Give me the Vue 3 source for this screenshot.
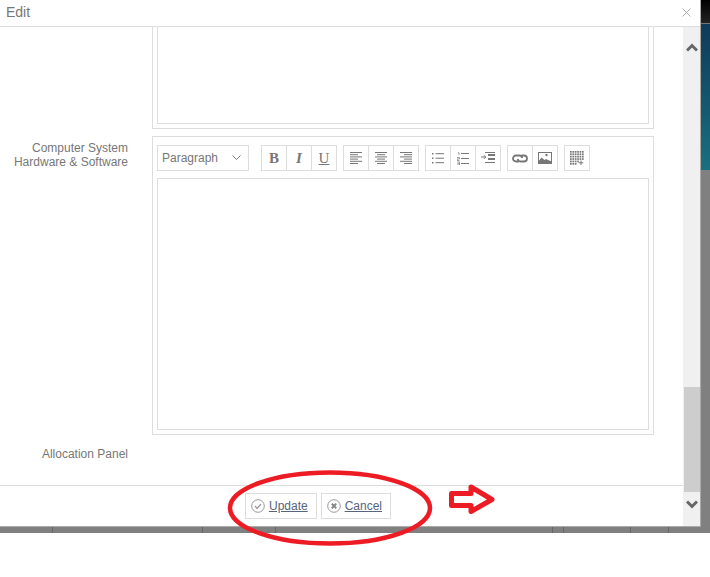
<script setup>
const groups = [
  [{ t: 'B', c: 'b' }, { t: 'I', c: 'i' }, { t: 'U', c: 'u' }],
  [{ k: 'left' }, { k: 'center' }, { k: 'right' }],
  [{ k: 'ul' }, { k: 'ol' }, { k: 'indent' }],
  [{ k: 'link' }, { k: 'image' }],
  [{ k: 'table' }],
]
const alignLines = {
  left: [[0, 12], [0, 8], [0, 12], [0, 8], [0, 12], [0, 8]],
  center: [[0, 12], [2, 8], [0, 12], [2, 8], [0, 12], [2, 8]],
  right: [[0, 12], [4, 8], [0, 12], [4, 8], [0, 12], [4, 8]],
}
const dots = []
for (let r = 0; r < 6; r++) {
  for (let c = 0; c < 6; c++) {
    if (!((r === 4 && c > 3) || (r === 5 && c > 2))) dots.push([c * 2.4, r * 2.4])
  }
}
const ticks = [52, 202, 275, 552, 563, 630, 668]
</script>

<template>
  <div class="page">
    <div class="backdrop">
      <div class="ticks">
        <i v-for="t in ticks" :key="t" class="tick" :style="{ left: t + 'px' }"></i>
      </div>
      <div class="modal">
        <header class="head">
          <span class="title">Edit</span>
          <svg width="9" height="9" viewBox="0 0 9 9"><path d="M.5.5l8 8M8.500.5l-8 8" stroke="#aaa" fill="none" /></svg>
        </header>
        <div class="content">
          <div class="col">
            <div class="form">
              <div class="row first">
                <div class="label"></div>
                <div class="frame cut"><div class="area a1"></div></div>
              </div>
              <div class="row">
                <div class="label">Computer System<br />Hardware &amp; Software</div>
                <div class="frame">
                  <div class="toolbar">
                    <div class="select"><span>Paragraph</span>
                      <svg width="9" height="6" viewBox="0 0 9 6"><path d="M.5.500L4.500 4.500 8.500.5" stroke="#777" fill="none" /></svg>
                    </div>
                    <div v-for="(g, gi) in groups" :key="gi" class="group">
                      <div v-for="(b, bi) in g" :key="bi" class="btn">
                        <span v-if="b.t" :class="b.c">{{ b.t }}</span>
                        <svg v-else-if="alignLines[b.k]" width="12" height="12" viewBox="0 0 12 12">
                          <rect v-for="(l, li) in alignLines[b.k]" :key="li" :x="l[0]" :y="li * 2.2" :width="l[1]" height="1" fill="#777" />
                        </svg>
                        <svg v-else-if="b.k === 'ul'" width="12" height="12" viewBox="0 0 12 12">
                          <g fill="#777"><rect x="0" y="1" width="1.500" height="1.500" /><rect x="0" y="5.500" width="1.500" height="1.500" /><rect x="0" y="10" width="1.500" height="1.500" /><rect x="3.500" y="1.200" width="8.500" height="1" /><rect x="3.500" y="5.700" width="8.500" height="1" /><rect x="3.500" y="10.200" width="8.500" height="1" /></g>
                        </svg>
                        <svg v-else-if="b.k === 'ol'" width="12" height="13" viewBox="0 0 12 13">
                          <g fill="#777"><rect x="4" y="1" width="8" height="1" /><rect x="4" y="6" width="8" height="1" /><rect x="4" y="11" width="8" height="1" /></g>
                          <path d="M1 1l1-.5V3M0 5.500h2.500V7H0v1.500h2.500M0 10h2.500v3H0M.5 11.500h2" stroke="#777" stroke-width=".7" fill="none" />
                        </svg>
                        <svg v-else-if="b.k === 'indent'" width="14" height="12" viewBox="0 0 14 12">
                          <g fill="#777"><rect x="4" y="0" width="10" height="1" /><rect x="7" y="2" width="7" height="2" /><rect x="7" y="6" width="7" height="2" /><rect x="4" y="10" width="10" height="1" /></g>
                          <path d="M0 5h4.500M3 3.200L4.800 5 3 6.800" stroke="#777" fill="none" />
                        </svg>
                        <svg v-else-if="b.k === 'link'" width="16" height="9" viewBox="0 0 16 9">
                          <path d="M7 7.500H4a3 3 0 0 1 0-6h3.500c1.500 0 2.500 1 2.700 2.500M9.500 1.500H12a3 3 0 0 1 0 6H8.500c-1.500 0-2.500-1-2.700-2.500" stroke="#777" stroke-width="1.800" fill="none" />
                        </svg>
                        <svg v-else-if="b.k === 'image'" width="14" height="12" viewBox="0 0 14 12">
                          <rect x=".5" y=".5" width="13" height="11" fill="#fff" stroke="#777" />
                          <circle cx="8.500" cy="3" r="1.200" fill="#777" />
                          <path d="M0 10l3.500-4.500 3 2.500 1.500-1 2 1 4 1.500V12H0z" fill="#777" />
                        </svg>
                        <svg v-else width="14" height="14" viewBox="0 0 14 14">
                          <rect v-for="(d, di) in dots" :key="di" :x="d[0]" :y="d[1]" width="1.700" height="1.700" fill="#777" />
                          <path d="M11 9.500V14M8.700 11.800h4.600" stroke="#777" fill="none" />
                        </svg>
                      </div>
                    </div>
                  </div>
                  <div class="area a2"></div>
                </div>
              </div>
              <div class="row last">
                <div class="label">Allocation Panel</div>
              </div>
            </div>
            <footer class="foot">
              <a class="action">
                <svg width="14" height="14" viewBox="0 0 14 14"><circle cx="7" cy="7" r="6.300" fill="none" stroke="#999" /><path d="M4 7l2.200 2.400L10 5" stroke="#999" stroke-width="1.300" fill="none" /></svg>
                <span>Update</span>
              </a>
              <a class="action">
                <svg width="14" height="14" viewBox="0 0 14 14"><circle cx="7" cy="7" r="6.300" fill="none" stroke="#999" /><path d="M4.800 4.800l4.400 4.400M9.200 4.800l-4.400 4.400" stroke="#888" stroke-width="2" fill="none" /></svg>
                <span>Cancel</span>
              </a>
            </footer>
          </div>
          <div class="scroll">
            <svg width="12" height="9" viewBox="0 0 12 9"><path d="M1 7.500L6 2.500l5 5" stroke="#666" stroke-width="3" fill="none" /></svg>
            <div class="track"><div class="thumb"></div></div>
            <svg width="12" height="9" viewBox="0 0 12 9"><path d="M1 1.500L6 6.500l5-5" stroke="#666" stroke-width="3" fill="none" /></svg>
          </div>
        </div>
      </div>
      <div class="strip"></div>
      <svg class="marks" width="710" height="577" viewBox="0 0 710 577">
        <ellipse cx="330" cy="508" rx="100" ry="35.500" fill="none" stroke="#ed1c24" stroke-width="4.500" />
        <path d="M451.500 493.500H471V487l21 12.500-21 12v-6H451.500z" fill="#fff" stroke="#ed1c24" stroke-width="5" stroke-linejoin="round" />
      </svg>
    </div>
  </div>
</template>

<style scoped>
.page {
  width: 710px;
  height: 577px;
  background: #fff;
  overflow: hidden;
  font-family: "Liberation Sans", Arial, sans-serif;
  color: #777;
}
.backdrop {
  position: relative;
  height: 533px;
  background: #808080;
  display: flex;
  align-items: flex-start;
}
.ticks { position: absolute; inset: 527px 0 0 0; }
.tick { position: absolute; top: 0; bottom: 0; width: 1px; background: #666; }
.modal {
  position: relative;
  width: 701px;
  height: 527px;
  flex: none;
  box-sizing: border-box;
  background: #fff;
  border-right: 1px solid #aaa;
  border-bottom: 1px solid #aaa;
  display: flex;
  flex-direction: column;
}
.head {
  height: 27px;
  flex: none;
  box-sizing: border-box;
  border-bottom: 1px solid #ddd;
  display: flex;
  justify-content: space-between;
  align-items: center;
  padding: 0 9px 2px 6px;
}
.title { font-size: 14px; color: #777; }
.content { flex: 1; display: flex; min-height: 0; }
.col { flex: 1; min-width: 0; display: flex; flex-direction: column; }
.form { flex: 1; overflow: hidden; padding-right: 29px; }
.row { display: flex; gap: 24px; }
.first { height: 102px; margin-bottom: 7px; }
.label {
  width: 128px;
  flex: none;
  text-align: right;
  font-size: 12px;
  line-height: 14px;
  padding-top: 5px;
  color: #777;
}
.frame {
  flex: 1;
  box-sizing: border-box;
  border: 1px solid #ddd;
  padding: 8px 4px 4px;
}
.cut { border-top: 0; padding-top: 0; height: 102px; }
.area { border: 1px solid #ddd; box-sizing: border-box; }
.a1 { height: 97px; border-top: 0; }
.a2 { height: 252px; margin-top: 7px; }
.toolbar { display: flex; height: 26px; }
.select {
  width: 92px;
  box-sizing: border-box;
  border: 1px solid #ddd;
  display: flex;
  align-items: center;
  justify-content: space-between;
  padding: 0 7px 0 4px;
  font-size: 12px;
  margin-right: 12px;
}
.group { display: flex; margin-right: 6px; border: 1px solid #ddd; box-sizing: border-box; }
.btn {
  width: 25px;
  display: flex;
  align-items: center;
  justify-content: center;
  border-left: 1px solid #ddd;
  box-sizing: border-box;
  font-family: "Liberation Serif", serif;
  font-size: 15px;
  color: #777;
}
.btn:first-child { border-left: 0; width: 24px; }
.b { font-weight: 700; }
.i { font-style: italic; font-weight: 700; }
.u { text-decoration: underline; }
.last { margin-top: 7px; }
.scroll {
  width: 17px;
  flex: none;
  background: #f0f0f0;
  display: flex;
  flex-direction: column;
  align-items: center;
  padding: 16px 0 17px;
  box-sizing: border-box;
}
.track { flex: 1; width: 100%; display: flex; flex-direction: column; justify-content: flex-end; }
.thumb { height: 105px; background: #cdcdcd; margin: 0 0 8px 1px; }
.foot {
  height: 41px;
  flex: none;
  box-sizing: border-box;
  border-top: 1px solid #ddd;
  display: flex;
  justify-content: center;
  align-items: flex-start;
  gap: 4px;
  padding: 7px 47px 0 0;
}
.action {
  height: 26px;
  box-sizing: border-box;
  border: 1px solid #ddd;
  display: flex;
  align-items: center;
  gap: 4px;
  padding: 0 8px 0 5px;
  font-size: 12px;
  color: #56647e;
}
.action span { text-decoration: underline; }
.strip {
  width: 9px;
  height: 170px;
  flex: none;
  background: linear-gradient(#000 0, #222 23px, #777 23px, #777 24px, #0f3a5a 24px, #1a6f80 170px);
}
.marks { position: absolute; left: 0; top: 0; pointer-events: none; }
</style>
